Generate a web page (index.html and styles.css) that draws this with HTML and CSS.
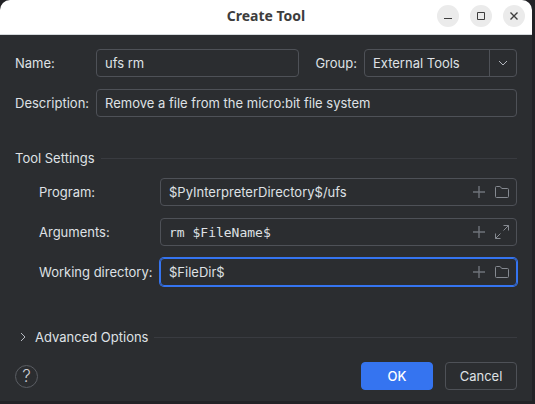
FILE: index.html
```html
<!DOCTYPE html>
<html lang="en">
<head>
<meta charset="utf-8">
<title>Create Tool</title>
<link rel="stylesheet" href="styles.css">
</head>
<body>
<svg class="symbols" aria-hidden="true">
  <symbol id="plus" viewBox="0 0 16 16"><path d="M8 2v12M2 8h12" stroke-width="1.4"/></symbol>
  <symbol id="folder" viewBox="0 0 16 16"><path d="M1.5 3.5a1 1 0 0 1 1-1h3.400l2.100 2h5.500a1 1 0 0 1 1 1v7a1 1 0 0 1-1 1h-11a1 1 0 0 1-1-1z"/></symbol>
  <symbol id="expand" viewBox="0 0 16 16"><path d="M9.500 1.500h5v5M14.500 1.500l-5 5M6.500 14.500h-5v-5M1.500 14.500l5-5"/></symbol>
</svg>
<main class="dialog">
  <header class="titlebar">
    <h1 class="title">Create Tool</h1>
    <div class="window-controls">
      <button class="window-button" type="button" aria-label="Minimize"><svg viewBox="0 0 22 22"><path d="M7 13.500h8"/></svg></button>
      <button class="window-button" type="button" aria-label="Maximize"><svg viewBox="0 0 22 22"><path d="M7.500 7.500h7v7h-7z"/></svg></button>
      <button class="window-button" type="button" aria-label="Close"><svg viewBox="0 0 22 22"><path d="M7.500 7.500l7 7M14.500 7.500l-7 7" stroke-width="1.4"/></svg></button>
    </div>
  </header>
  <form class="content">
    <div class="row">
      <label class="label" for="name">Name:</label>
      <div class="field"><input id="name" type="text" value="ufs rm"></div>
      <label class="group-label" for="group">Group:</label>
      <div class="select">
        <select id="group"><option>External Tools</option></select>
        <svg class="chevron" viewBox="0 0 16 16" aria-hidden="true"><path d="M4 6l4 4 4-4"/></svg>
      </div>
    </div>
    <div class="row">
      <label class="label" for="description">Description:</label>
      <div class="field"><input id="description" type="text" value="Remove a file from the micro:bit file system"></div>
    </div>
    <h2 class="section">Tool Settings</h2>
    <div class="settings">
      <div class="row">
        <label class="label" for="program">Program:</label>
        <div class="field">
          <input id="program" type="text" value="$PyInterpreterDirectory$/ufs">
          <button class="icon-button dim" type="button" aria-label="Insert macro"><svg><use href="#plus"/></svg></button>
          <button class="icon-button" type="button" aria-label="Browse"><svg><use href="#folder"/></svg></button>
        </div>
      </div>
      <div class="row">
        <label class="label" for="arguments">Arguments:</label>
        <div class="field">
          <input id="arguments" class="mono" type="text" value="rm $FileName$">
          <button class="icon-button dim" type="button" aria-label="Insert macro"><svg><use href="#plus"/></svg></button>
          <button class="icon-button" type="button" aria-label="Expand"><svg><use href="#expand"/></svg></button>
        </div>
      </div>
      <div class="row">
        <label class="label" for="directory">Working directory:</label>
        <div class="field active">
          <input id="directory" type="text" value="$FileDir$">
          <button class="icon-button dim" type="button" aria-label="Insert macro"><svg><use href="#plus"/></svg></button>
          <button class="icon-button" type="button" aria-label="Browse"><svg><use href="#folder"/></svg></button>
        </div>
      </div>
    </div>
    <div class="section advanced">
      <button class="disclosure" type="button" aria-expanded="false"><svg viewBox="0 0 16 16" aria-hidden="true"><path d="M6 4l4 4-4 4"/></svg>Advanced Options</button>
    </div>
    <footer class="actions">
      <button class="help" type="button" aria-label="Help">?</button>
      <button class="button primary" type="submit">OK</button>
      <button class="button" type="button">Cancel</button>
    </footer>
  </form>
</main>
</body>
</html>
```
FILE: styles.css
```css
* { box-sizing: border-box; }

body {
  margin: 0;
  padding: 0 3px 3px 0;
  background: #222226;
  color: #dfe1e5;
  font: 13px/20px Inter, sans-serif;
}

button, input, select {
  margin: 0;
  padding: 0;
  border: 0;
  outline: 0;
  background: none;
  color: inherit;
  font: inherit;
}

svg {
  display: block;
  width: 16px;
  height: 16px;
  fill: none;
  stroke: currentColor;
}

.symbols {
  position: absolute;
  width: 0;
  height: 0;
}

.dialog {
  overflow: hidden;
  border-radius: 10px 10px 0 0;
  background: #2b2d30;
}

.titlebar {
  display: grid;
  grid-template-columns: 1fr auto 1fr;
  align-items: center;
  height: 35px;
  padding: 0 7px;
  border-bottom: 1px solid #d5d9dc;
  background: #fff;
  color: #3d3d3d;
}

.title {
  grid-column: 2;
  margin: 0;
  padding-bottom: 2px;
  font: bold 14px/20px "Noto Sans", sans-serif;
}

.window-controls {
  display: flex;
  justify-content: flex-end;
  gap: 11px;
  padding-bottom: 2px;
}

.window-button {
  width: 22px;
  height: 22px;
  border-radius: 50%;
  background: #ebebeb;
}

.window-button svg {
  width: 22px;
  height: 22px;
}

.content { padding: 14px 15px 11px; }

.row {
  display: flex;
  align-items: center;
  margin-bottom: 12px;
}

.label {
  flex: none;
  width: 81px;
  white-space: nowrap;
}

.group-label { margin: 0 7px 0 16px; }

.field, .select {
  display: flex;
  align-items: center;
  height: 28px;
  border: 1px solid #4e5157;
  border-radius: 4px;
}

.field {
  flex: 1;
  min-width: 0;
  gap: 7px;
  padding: 0 6px 0 8px;
}

.field input {
  flex: 1;
  width: 0;
  min-width: 0;
}

.field .mono {
  padding-top: 2px;
  font: 13px/20px "DejaVu Sans Mono", monospace;
}

.active {
  border-color: #3574f0;
  box-shadow: 0 0 0 1px #3574f0;
}

.icon-button {
  flex: none;
  color: #868a91;
}

.dim { color: #6f737a; }

.select {
  position: relative;
  width: 153px;
}

.select select {
  width: 100%;
  height: 26px;
  padding: 0 28px 0 8px;
  appearance: none;
}

.chevron {
  position: absolute;
  right: 0;
  width: 27px;
  height: 26px;
  padding: 5px;
  border-left: 1px solid #4e5157;
  color: #b4b8bf;
  pointer-events: none;
}

.section {
  display: flex;
  align-items: center;
  gap: 6px;
  margin: 31px 0 10px;
  font: inherit;
}

.section::after {
  flex: 1;
  height: 1px;
  background: #393b40;
  content: "";
}

.settings { padding-left: 24px; }

.settings .label { width: 121px; }

.advanced { margin: 41px 0 15px; }

.disclosure {
  display: flex;
  align-items: center;
  gap: 4px;
}

.disclosure svg { color: #b4b8bf; }

.actions {
  display: flex;
  align-items: center;
  gap: 12px;
}

.help {
  width: 23px;
  height: 23px;
  margin-right: auto;
  border: 1px solid #5a5d63;
  border-radius: 50%;
  font-size: 17px;
  font-weight: 300;
  color: #ced0d6;
}

.button {
  width: 72px;
  height: 28px;
  border: 1px solid #4e5157;
  border-radius: 4px;
}

.primary {
  border-color: #3574f0;
  background: #3574f0;
  color: #fff;
  font-weight: 500;
}
```
